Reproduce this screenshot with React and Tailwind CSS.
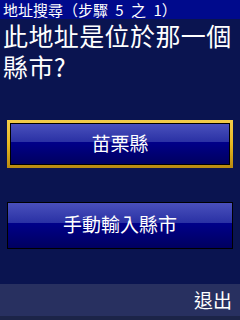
const FONT = { fontFamily: '"Noto Sans CJK TC", "Noto Sans CJK SC", sans-serif' };

function GlossButton({ label, selected }) {
  return (
    <div
      className={
        selected
          ? 'mx-[7px] h-[48px] p-[3px] bg-gradient-to-b from-[#f2cc4a] via-[#e8b820] to-[#b88a10]'
          : 'mx-[7px] h-[47px]'
      }
    >
      <div className="h-full border border-black flex flex-col relative">
        <div className="absolute inset-0 flex flex-col">
          <div className="h-[45%] bg-gradient-to-b from-[#4a50bc] to-[#2a30a4]" />
          <div className="flex-1 bg-gradient-to-b from-[#00008a] to-[#000060]" />
        </div>
        <div className="relative flex-1 flex items-center justify-center pb-[4px] text-white text-[19px] leading-none">
          {label}
        </div>
      </div>
    </div>
  );
}

export default function App() {
  return (
    <div className="w-[240px] h-[320px] flex flex-col bg-[#0a1450] overflow-hidden" style={FONT}>
      <div className="h-[19px] bg-[#000a8c] text-white text-[15px] leading-[19px] pl-[3px] whitespace-nowrap [word-spacing:4px]">
        地址搜尋（步驟 5 之 1）
      </div>
      <div className="pl-[3px] pt-[1px] text-white text-[25px] leading-[31px] tracking-[0.4px]">
        此地址是位於那一個<br />縣市?
      </div>
      <div className="mt-[38px]">
        <GlossButton label="苗栗縣" selected />
      </div>
      <div className="mt-[34px]">
        <GlossButton label="手動輸入縣市" />
      </div>
      <div className="flex-1" />
      <div className="h-[36px] flex flex-col">
        <div className="flex-1 bg-[#283060] flex items-center justify-end pr-[8px] pb-[2px] text-white text-[19px] leading-none">
          退出
        </div>
        <div className="h-[4px] bg-[#1c2448]" />
      </div>
    </div>
  );
}
